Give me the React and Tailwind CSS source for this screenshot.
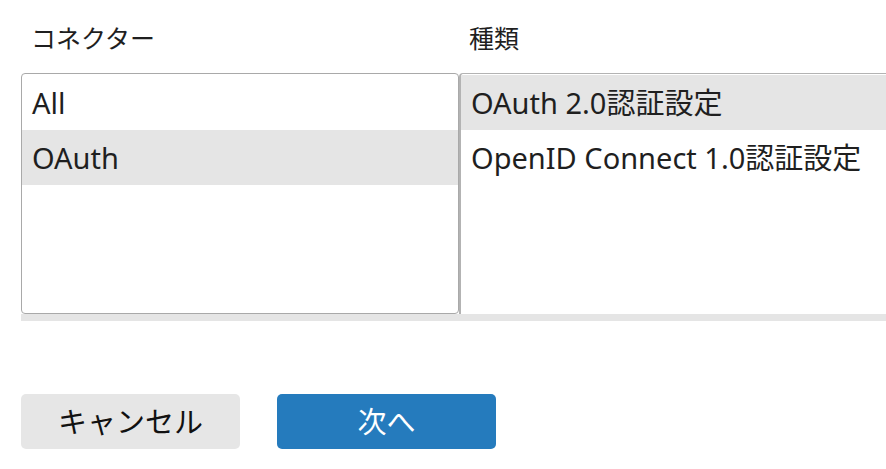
export default function App() {
  const connectors = ["All", "OAuth"];
  const kinds = ["OAuth 2.0認証設定", "OpenID Connect 1.0認証設定"];

  return (
    <div
      className="w-[886px] h-[469px] bg-white text-[#1f1f1f] overflow-hidden"
      style={{ fontFamily: '"Noto Sans", "Noto Sans CJK JP", sans-serif' }}
    >
      {/* Headers */}
      <div className="flex pt-[20px] h-[73px]">
        <div className="w-[438px] ml-[21px] pl-[10px] text-[25px] leading-[36px]">コネクター</div>
        <div className="pl-[10px] text-[25px] leading-[36px]">種類</div>
      </div>

      {/* Lists */}
      <div className="ml-[21px] flex flex-col">
        <div className="flex h-[241px]">
          <div className="w-[438px] shrink-0 border border-[#a9a9a9] rounded-[4px] py-px">
            {connectors.map((c, i) => (
              <div
                key={c}
                className={`h-[55px] flex items-center pl-[10px] text-[29px] ${i === 1 ? "bg-[#e5e5e5]" : ""}`}
              >
                {c}
              </div>
            ))}
          </div>
          <div className="flex-1 border-l-2 border-t border-[#b3b3b3] rounded-tl-[4px] py-px">
            {kinds.map((k, i) => (
              <div
                key={k}
                className={`h-[55px] flex items-center pl-[10px] text-[29px] whitespace-nowrap ${i === 0 ? "bg-[#e5e5e5]" : ""}`}
              >
                {k}
              </div>
            ))}
          </div>
        </div>
        <div className="h-[7px] bg-[#e5e5e5]" />
      </div>

      {/* Buttons */}
      <div className="flex gap-[37px] ml-[21px] mt-[73px]">
        <button className="w-[219px] h-[55px] rounded-[5px] bg-[#e6e6e6] text-[29px] text-[#111]">
          キャンセル
        </button>
        <button className="w-[219px] h-[55px] rounded-[5px] bg-[#257bbd] text-[29px] text-white">
          次へ
        </button>
      </div>
    </div>
  );
}
